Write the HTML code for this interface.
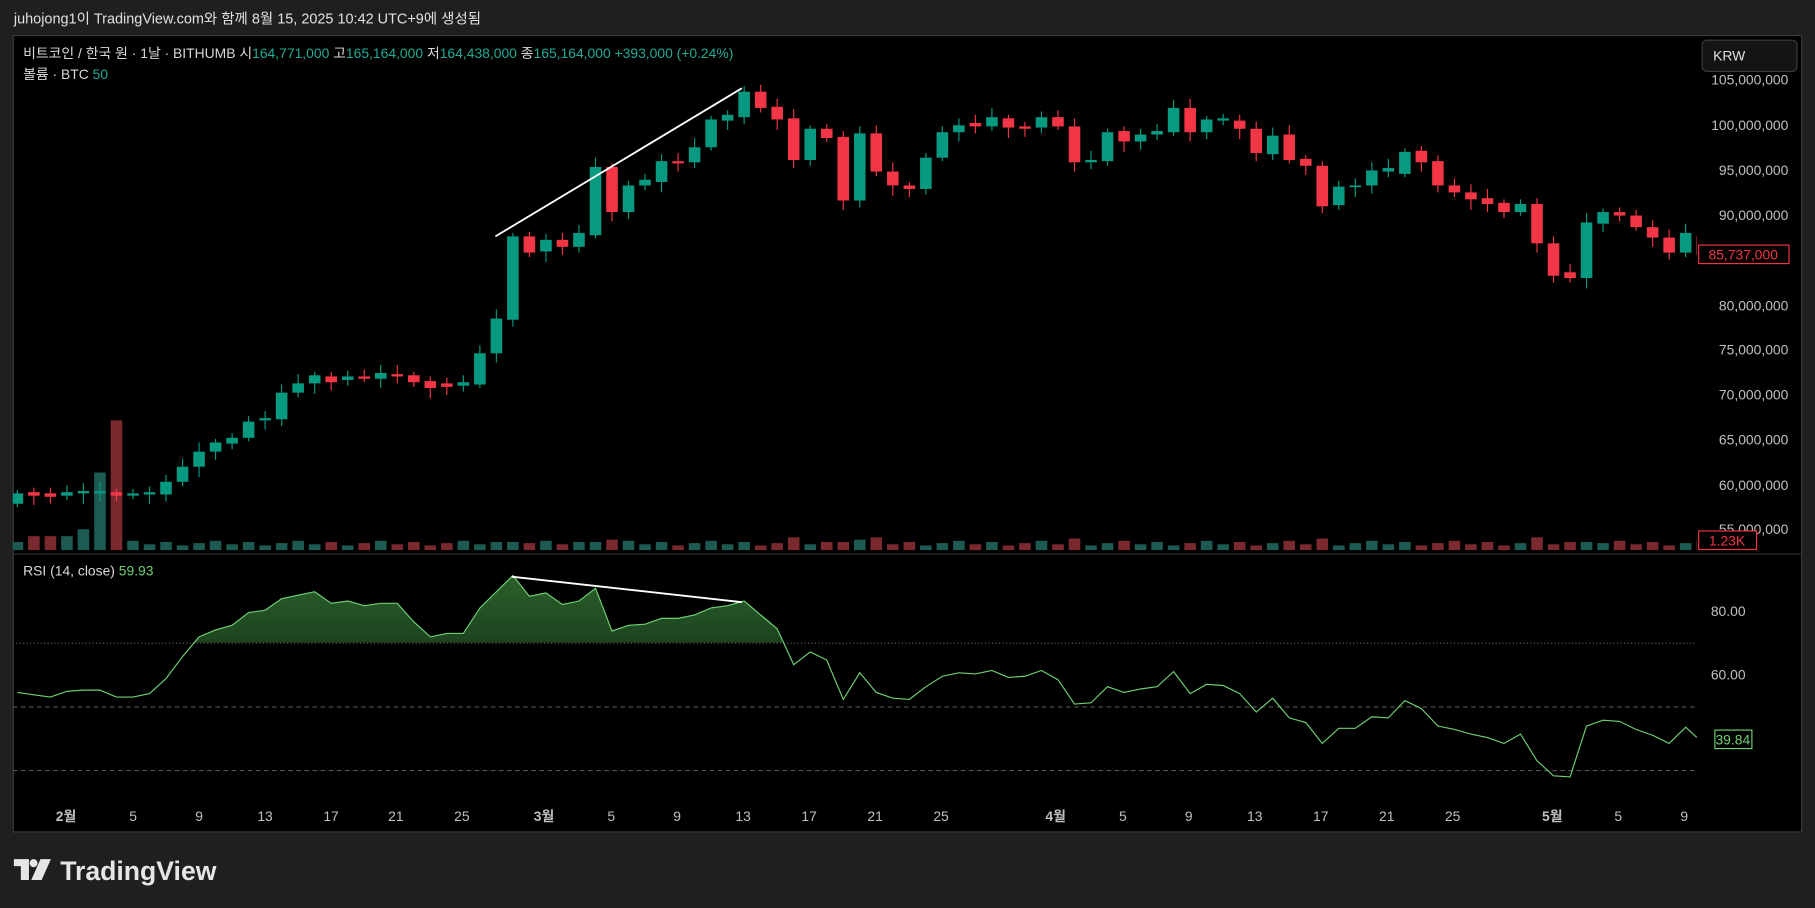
<!DOCTYPE html>
<html><head><meta charset="utf-8"><style>
html,body{margin:0;padding:0;background:#1f1f1f;width:1815px;height:908px;overflow:hidden}
svg{display:block}
text{font-family:"Liberation Sans","Noto Sans CJK KR",sans-serif}
</style></head><body>
<svg id="s" width="1815" height="908" viewBox="0 0 1568 784" xmlns="http://www.w3.org/2000/svg">
<defs>
<linearGradient id="g" x1="0" y1="0" x2="0" y2="1"><stop offset="0" stop-color="#4caf50" stop-opacity="0.55"/><stop offset="1" stop-color="#4caf50" stop-opacity="0.05"/></linearGradient>
<clipPath id="above"><rect x="0" y="480" width="1466" height="75"/></clipPath>
<clipPath id="pane"><rect x="11" y="31" width="1455" height="657"/></clipPath>
</defs>
<rect width="1568" height="784" fill="#1f1f1f"/>
<text x="12" y="20" font-size="12.5" fill="#e0e0e0">juhojong1이 TradingView.com와 함께 8월 15, 2025 10:42 UTC+9에 생성됨</text>
<rect x="11.5" y="30.5" width="1545" height="688" fill="#000" stroke="#3a3a3a"/>
<line x1="11" y1="478.5" x2="1557" y2="478.5" stroke="#2a2a2a"/>
<line x1="11" y1="555.5" x2="1466" y2="555.5" stroke="#555" stroke-dasharray="1,2"/>
<line x1="11" y1="610.5" x2="1466" y2="610.5" stroke="#555" stroke-dasharray="4,3"/>
<line x1="11" y1="665.5" x2="1466" y2="665.5" stroke="#555" stroke-dasharray="4,3"/>
<g id="chart" clip-path="url(#pane)"></g>
<text x="20" y="50" font-size="12" fill="#d8d8d8">비트코인 / 한국 원 · 1날 · BITHUMB  시<tspan fill="#22ab94">164,771,000</tspan>  고<tspan fill="#22ab94">165,164,000</tspan>  저<tspan fill="#22ab94">164,438,000</tspan>  종<tspan fill="#22ab94">165,164,000  +393,000 (+0.24%)</tspan></text>
<text x="20" y="68" font-size="12" fill="#d8d8d8">볼륨 · BTC  <tspan fill="#22ab94">50</tspan></text>
<text x="20" y="497" font-size="12" fill="#d8d8d8">RSI (14, close)  <tspan fill="#6fcf73">59.93</tspan></text>
<rect x="1470.5" y="34.5" width="82" height="27" rx="4" fill="#141414" stroke="#3c3c3c"/>
<text x="1480" y="52" font-size="12" fill="#e0e0e0">KRW</text>
<g font-size="12" fill="#c0c0c0" text-anchor="end" id="ax">
<text x="1545" y="73">105,000,000</text>
<text x="1545" y="112">100,000,000</text>
<text x="1545" y="151">95,000,000</text>
<text x="1545" y="190">90,000,000</text>
<text x="1545" y="268">80,000,000</text>
<text x="1545" y="306">75,000,000</text>
<text x="1545" y="345">70,000,000</text>
<text x="1545" y="384">65,000,000</text>
<text x="1545" y="423">60,000,000</text>
<text x="1545" y="461">55,000,000</text>
<text x="1508" y="532">80.00</text>
<text x="1508" y="587">60.00</text>
</g>
<rect x="1467.5" y="211.5" width="78" height="16" fill="#000" stroke="#f23645"/>
<text x="1506" y="224" font-size="12" fill="#f23645" text-anchor="middle">85,737,000</text>
<rect x="1467.5" y="458.5" width="50" height="16" fill="#000" stroke="#f23645"/>
<text x="1492" y="471" font-size="12" fill="#f23645" text-anchor="middle">1.23K</text>
<rect x="1481.5" y="630.5" width="32" height="16" fill="#000" stroke="#6fcf73"/>
<text x="1497" y="643" font-size="12" fill="#6fcf73" text-anchor="middle">39.84</text>
<g font-size="12" fill="#c0c0c0" text-anchor="middle" id="tx"></g>
<g transform="translate(12,742)" fill="#e6e6e6">
<path d="M0 0H13V18H6V6H0Z"/><circle cx="17" cy="3.5" r="3.5"/><path d="M23 0H32L24 18H15Z"/>
</g>
<text x="52" y="760" font-size="23" font-weight="bold" fill="#e6e6e6">TradingView</text>
</svg>
<script>
var NS="http://www.w3.org/2000/svg";
function el(p,t,a,txt){var e=document.createElementNS(NS,t);for(var k in a)e.setAttribute(k,a[k]);if(txt)e.textContent=txt;p.appendChild(e);return e;}
var C=[[426,435,'g'],[425,428,'r'],[426,429,'r'],[425,428,'g'],[424,426,'g'],[424,426,'g'],[425,428,'r'],[426,428,'g'],[425,427,'g'],[416,427,'g'],[403,416,'g'],[390,403,'g'],[382,390,'g'],[378,383,'g'],[364,378,'g'],[361,363,'g'],[339,362,'g'],[331,339,'g'],[324,331,'g'],[325,330,'r'],[325,328,'g'],[325,327,'r'],[322,327,'g'],[323,325,'r'],[324,330,'r'],[329,335,'r'],[331,334,'r'],[330,333,'g'],[305,332,'g'],[275,305,'g'],[204,276,'g'],[204,218,'r'],[207,217,'g'],[207,213,'r'],[201,213,'g'],[144,203,'g'],[144,183,'r'],[160,183,'g'],[155,160,'g'],[139,157,'g'],[139,141,'r'],[127,140,'g'],[103,127,'g'],[99,104,'g'],[79,101,'g'],[79,93,'r'],[92,103,'r'],[102,138,'r'],[111,138,'g'],[111,119,'r'],[118,173,'r'],[115,173,'g'],[115,148,'r'],[148,160,'r'],[160,163,'r'],[136,163,'g'],[114,136,'g'],[108,114,'g'],[106,109,'r'],[101,109,'g'],[102,110,'r'],[109,111,'r'],[101,110,'g'],[101,109,'r'],[109,140,'r'],[138,140,'g'],[114,139,'g'],[113,122,'r'],[116,122,'g'],[113,116,'g'],[93,114,'g'],[93,114,'r'],[103,114,'g'],[102,104,'g'],[104,111,'r'],[111,132,'r'],[117,133,'g'],[116,138,'r'],[137,143,'r'],[143,178,'r'],[161,177,'g'],[160,161,'g'],[147,160,'g'],[145,148,'g'],[131,150,'g'],[130,140,'r'],[139,160,'r'],[160,166,'r'],[166,172,'r'],[171,176,'r'],[175,183,'r'],[176,183,'g'],[176,210,'r'],[210,238,'r'],[235,240,'r'],[192,240,'g'],[183,193,'g'],[183,186,'r'],[186,196,'r'],[196,205,'r'],[205,218,'r'],[201,218,'g'],[204,220,'r']];
var R=[598,600,602,597,596,596,602,602,599,586,567,550,544,540,529,527,517,514,511,521,519,523,521,521,537,550,547,547,525,511,497,515,512,522,519,508,545,540,539,534,534,531,525,523,519,531,543,574,563,570,604,581,598,603,604,593,584,581,582,579,585,584,579,587,608,607,593,598,595,593,580,599,591,592,599,615,603,620,624,642,629,629,619,620,605,612,627,630,634,637,642,634,657,670,671,627,622,623,630,635,642,628,637];
var ch=document.getElementById('chart');
function X(i){return 15+i*14.27;}
var vh=[7,12,12,12,18,67,112];
for(var i=0;i<C.length;i++){
 var x=X(i),c=C[i],vc=c[2]=='g'?'#1c5a52':'#7a2a2e';
 var h=i<vh.length?vh[i]:(4+((i*37)%5)+(c[1]-c[0]>30?3:0));
 el(ch,'rect',{x:x-5,y:475-h,width:10,height:h,fill:vc});
}
for(var i=0;i<C.length;i++){
 var x=X(i),c=C[i],col=c[2]=='g'?'#089981':'#f23645';
 var w1=c[0]-3-((i*7)%6),w2=c[1]+3+((i*5)%7);
 el(ch,'line',{x1:x,y1:w1,x2:x,y2:w2,stroke:col,'stroke-width':1});
 el(ch,'rect',{x:x-5,y:c[0],width:10,height:Math.max(1.5,c[1]-c[0]),fill:col});
}
var pts=R.map(function(y,i){return (i==R.length-1?1466:X(i)).toFixed(1)+','+y;}).join(' ');
el(ch,'polygon',{points:X(0)+',555 '+pts+' 1466,555',fill:'url(#g)','clip-path':'url(#above)'});
el(ch,'polyline',{points:pts,fill:'none',stroke:'#6fcf73','stroke-width':1});
el(ch,'line',{x1:428,y1:204,x2:641,y2:76,stroke:'#fff','stroke-width':1.6});
el(ch,'line',{x1:442,y1:498,x2:641,y2:520,stroke:'#fff','stroke-width':1.6});
var T=[['2월',57,1],['5',115],['9',172],['13',229],['17',286],['21',342],['25',399],['3월',470,1],['5',528],['9',585],['13',642],['17',699],['21',756],['25',813],['4월',912,1],['5',970],['9',1027],['13',1084],['17',1141],['21',1198],['25',1255],['5월',1341,1],['5',1398],['9',1455]];
var tx=document.getElementById('tx');
T.forEach(function(t){var a={x:t[1],y:709};if(t[2])a['font-weight']='bold';el(tx,'text',a,t[0]);});
</script>
</body></html>
